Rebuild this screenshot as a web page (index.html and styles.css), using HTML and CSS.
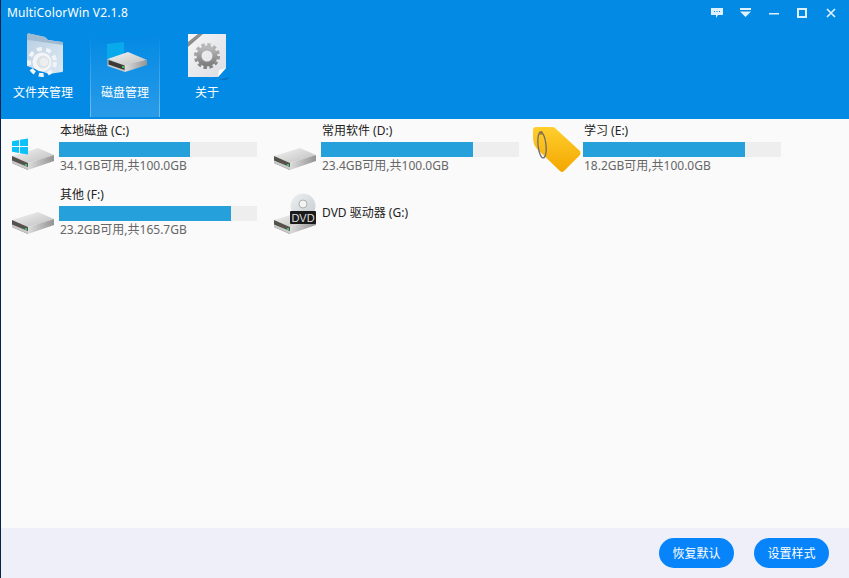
FILE: index.html
```html
<!DOCTYPE html>
<html lang="zh-CN">
<head>
    <meta charset="UTF-8">
    <meta name="viewport" content="width=device-width, initial-scale=1.0">
    <title>MultiColorWin V2.1.8</title>
    <link rel="stylesheet" href="styles.css">
</head>
<body>
    <svg class="defs" width="0" height="0" aria-hidden="true">
        <defs>
            <linearGradient id="top-face" x1="0" y1="0" x2="1" y2="1">
                <stop offset="0" stop-color="#f4f4f4"/>
                <stop offset="1" stop-color="#bdbdbd"/>
            </linearGradient>
            <linearGradient id="side-face" x1="0" y1="0" x2="1" y2="0">
                <stop offset="0" stop-color="#dcdcdc"/>
                <stop offset="1" stop-color="#949494"/>
            </linearGradient>
            <linearGradient id="tag-face" x1="0" y1="0" x2="0" y2="1">
                <stop offset="0" stop-color="#ffcf2e"/>
                <stop offset="1" stop-color="#f4a600"/>
            </linearGradient>
            <linearGradient id="sheet" x1="0" y1="0" x2="1" y2="1">
                <stop offset="0" stop-color="#f6f6f8"/>
                <stop offset="1" stop-color="#dcdde3"/>
            </linearGradient>
            <linearGradient id="folder" x1="0" y1="0" x2="1" y2="1">
                <stop offset="0" stop-color="#b9cfe3"/>
                <stop offset="1" stop-color="#dce8f2"/>
            </linearGradient>
            <linearGradient id="gear-metal" x1="0" y1="0" x2="0" y2="1">
                <stop offset="0" stop-color="#b8b8b8"/>
                <stop offset="1" stop-color="#7f7f7f"/>
            </linearGradient>
            <linearGradient id="disc" x1="0" y1="0" x2="1" y2="1">
                <stop offset="0" stop-color="#eef1f2"/>
                <stop offset="1" stop-color="#c4cbcf"/>
            </linearGradient>
            <symbol id="drive" viewBox="0 0 44 24">
                <path d="M1 9 27 1 43 8 17 16Z" fill="url(#top-face)"/>
                <path d="M17 16 43 8V14L17 23Z" fill="url(#side-face)"/>
                <path d="M1 9 17 16V23L1 16Z" fill="#55524e"/>
                <path d="M1 13.500 17 20V23L1 16Z" fill="#c9c9c9"/>
                <rect x="14" y="17" width="2" height="2" fill="#35c45f"/>
            </symbol>
            <symbol id="win-flag" viewBox="0 0 17 17">
                <path d="M0 3 7.500 1.600V8H0ZM8.500 1.400 17 0V8H8.500ZM0 9H7.500V15.400L0 14ZM8.500 9H17V17L8.500 15.600Z" fill="#0cc0f8"/>
            </symbol>
        </defs>
    </svg>

    <div class="window">
        <header class="top">
            <div class="titlebar">
                <span class="app-title">MultiColorWin V2.1.8</span>
                <div class="win-buttons">
                    <span class="win-btn">
                        <svg width="12" height="10" viewBox="0 0 12 10"><path d="M0 0H12V7H7L5 10V7H0Z" fill="#dff0fc"/><path d="M3 3.500H4M5.500 3.500H6.500M8 3.500H9" stroke="#0a8ae2"/></svg>
                    </span>
                    <span class="win-btn">
                        <svg width="11" height="9" viewBox="0 0 11 9"><path d="M0 0H11V2H0ZM0 3.500H11L5.500 9Z" fill="#dff0fc"/></svg>
                    </span>
                    <span class="win-btn">
                        <svg width="10" height="10" viewBox="0 0 10 10"><path d="M0 5H10V6.500H0Z" fill="#dff0fc"/></svg>
                    </span>
                    <span class="win-btn">
                        <svg width="10" height="10" viewBox="0 0 10 10"><path d="M1 1H9V9H1Z" fill="none" stroke="#dff0fc" stroke-width="2"/></svg>
                    </span>
                    <span class="win-btn">
                        <svg width="10" height="10" viewBox="0 0 10 10"><path d="M1 1 9 9M9 1 1 9" stroke="#dff0fc" stroke-width="1.700"/></svg>
                    </span>
                </div>
            </div>
            <nav class="tabs">
                <div class="tab">
                    <svg class="tab-icon" width="48" height="48" viewBox="0 0 48 48">
                        <path d="M8 2Q8 0 10 0.500L26 4 29 7 43 9Q44 9 44 11V38Q44 39 43 39L30 41 8 33Z" fill="url(#folder)"/>
                        <path d="M8 2Q8 0 10 0.500L26 4 29 7 43 9Q44 9 44 11V12L9 7 8 8Z" fill="#a3bbd1"/>
                        <circle cx="23" cy="29" r="13" fill="none" stroke="#f1f3f4" stroke-width="4" stroke-dasharray="5 4.300"/>
                        <circle cx="23" cy="29" r="9.500" fill="#f4f5f6"/>
                        <circle cx="24" cy="29" r="6.500" fill="#dde2e5"/>
                        <circle cx="25" cy="29" r="4" fill="#eceff0"/>
                    </svg>
                    <span class="tab-label">文件夹管理</span>
                </div>
                <div class="tab active">
                    <svg class="tab-icon" width="48" height="48" viewBox="0 0 48 48">
                        <path d="M6 11 23 9V26L6 27Z" fill="#09aaec"/>
                        <path d="M6.500 26 27 19 46 27 24 33Z" fill="url(#top-face)"/>
                        <path d="M24 32 46 27V32L24 39Z" fill="url(#side-face)"/>
                        <path d="M6.500 26 24 32V39L6.500 33Z" fill="#c8c8c8"/>
                        <path d="M7.500 27 23.500 32.500V37L7.500 31.500Z" fill="#3b3a38"/>
                        <rect x="21" y="33" width="2" height="2" fill="#35c45f"/>
                    </svg>
                    <span class="tab-label">磁盘管理</span>
                </div>
                <div class="tab">
                    <svg class="tab-icon" width="48" height="48" viewBox="0 0 48 48">
                        <path d="M7 47H36L47 44 43 47Z" fill="#0a5fa0" opacity=".6"/>
                        <path d="M5 1H43V35L35 44H5Z" fill="url(#sheet)"/>
                        <path d="M5 9 15 1H20L5 14Z" fill="#8e8e8e"/>
                        <circle cx="24" cy="23" r="8" fill="none" stroke="url(#gear-metal)" stroke-width="5"/>
                        <circle cx="24" cy="23" r="11.500" fill="none" stroke="url(#gear-metal)" stroke-width="3" stroke-dasharray="3.400 2.620"/>
                        <path d="M35 44 36 37 43 35Z" fill="#fff"/>
                    </svg>
                    <span class="tab-label">关于</span>
                </div>
            </nav>
        </header>

        <main class="drives">
            <div class="drive">
                <svg class="drive-icon" width="46" height="46" viewBox="0 0 46 46">
                    <use href="#drive" x="0" y="21" width="44" height="24"/>
                    <use href="#win-flag" x="1" y="12" width="16" height="17"/>
                </svg>
                <div class="drive-info">
                    <div class="drive-name">本地磁盘 (C:)</div>
                    <div class="bar"><div class="bar-fill" style="width: 66.200%"></div></div>
                    <div class="drive-size">34.1GB可用,共100.0GB</div>
                </div>
            </div>
            <div class="drive">
                <svg class="drive-icon" width="46" height="46" viewBox="0 0 46 46">
                    <use href="#drive" x="0" y="21" width="44" height="24"/>
                </svg>
                <div class="drive-info">
                    <div class="drive-name">常用软件 (D:)</div>
                    <div class="bar"><div class="bar-fill" style="width: 76.800%"></div></div>
                    <div class="drive-size">23.4GB可用,共100.0GB</div>
                </div>
            </div>
            <div class="drive">
                <svg class="drive-icon" width="46" height="46" viewBox="0 0 46 46">
                    <path d="M-2 4Q-2 1 1 1L17 1Q19 1 20 2L45 25Q46 27 45 29L29 45Q27 47 25 45L3 24Q-2 19 -2 12Z" fill="url(#tag-face)"/>
                    <circle cx="6" cy="7" r="2" fill="#c98a00"/>
                    <ellipse cx="7" cy="19" rx="4" ry="13" transform="rotate(-6 7 19)" fill="none" stroke="#6d6d6d" stroke-width="1.300"/>
                </svg>
                <div class="drive-info">
                    <div class="drive-name">学习 (E:)</div>
                    <div class="bar"><div class="bar-fill" style="width: 81.800%"></div></div>
                    <div class="drive-size">18.2GB可用,共100.0GB</div>
                </div>
            </div>
            <div class="drive">
                <svg class="drive-icon" width="46" height="46" viewBox="0 0 46 46">
                    <use href="#drive" x="0" y="21" width="44" height="24"/>
                </svg>
                <div class="drive-info">
                    <div class="drive-name">其他 (F:)</div>
                    <div class="bar"><div class="bar-fill" style="width: 87%"></div></div>
                    <div class="drive-size">23.2GB可用,共165.7GB</div>
                </div>
            </div>
            <div class="drive">
                <svg class="drive-icon" width="46" height="46" viewBox="0 0 46 46">
                    <use href="#drive" x="0" y="21" width="44" height="24"/>
                    <circle cx="30" cy="16" r="12.500" fill="url(#disc)"/>
                    <circle cx="30" cy="14" r="4" fill="#f4f4f4" stroke="#b0b0b0"/>
                    <path d="M18 21H42Q43 21 43 22V33Q43 34 42 34H18Q17 34 17 33V22Q17 21 18 21Z" fill="#1a1a1a"/>
                    <text class="dvd-text" x="30" y="31.500">DVD</text>
                </svg>
                <div class="drive-info">
                    <div class="drive-name drive-name-only">DVD 驱动器 (G:)</div>
                </div>
            </div>
        </main>

        <footer class="bottom">
            <button class="pill">恢复默认</button>
            <button class="pill">设置样式</button>
        </footer>
    </div>
</body>
</html>
```

FILE: styles.css
```css
body {
    margin: 0;
    padding: 0;
    font-family: "Noto Sans", "Noto Sans CJK SC", sans-serif;
    font-size: 12px;
    background-color: #fafafa;
}
.defs {
    position: absolute;
}
.window {
    display: flex;
    flex-direction: column;
    width: 100%;
    height: 578px;
    box-sizing: border-box;
    border-left: 1px solid #06234a;
    overflow: hidden;
}
.top {
    height: 119px;
    background-color: #038ae4;
    color: #fff;
    flex-shrink: 0;
}
.titlebar {
    display: flex;
    justify-content: space-between;
    align-items: center;
    height: 25px;
    padding: 0 4px 0 6px;
}
.app-title {
    font-size: 12px;
    letter-spacing: 0.15px;
}
.win-buttons {
    display: flex;
}
.win-btn {
    display: flex;
    justify-content: center;
    align-items: center;
    width: 28.500px;
    height: 25px;
}
.tabs {
    display: flex;
    gap: 12px;
    padding: 11px 0 0 7px;
}
.tab {
    display: flex;
    flex-direction: column;
    align-items: center;
    width: 70px;
    height: 81px;
    box-sizing: border-box;
}
.tab.active {
    background: linear-gradient(to bottom, rgba(255,255,255,0), rgba(255,255,255,0.15));
    border-left: 1px solid;
    border-right: 1px solid;
    border-image: linear-gradient(to bottom, rgba(255,255,255,0), rgba(255,255,255,0.35)) 1;
}
.tab-icon {
    margin-top: -3px;
    flex-shrink: 0;
}
.tab-label {
    margin-top: 3px;
    font-size: 12px;
    line-height: 18px;
    white-space: nowrap;
}
.drives {
    flex: 1;
    display: grid;
    grid-template-columns: repeat(3, 262px);
    grid-auto-rows: 64px;
    align-content: start;
    padding: 2px 0 0 10px;
    background-color: #fafafa;
}
.drive {
    display: flex;
}
.drive-icon {
    flex-shrink: 0;
    overflow: visible;
    margin: 5px 2px 0 0;
}
.drive-info {
    display: flex;
    flex-direction: column;
    width: 198px;
}
.drive-name {
    height: 21px;
    line-height: 20px;
    padding-left: 1px;
    color: #222;
}
.drive-name-only {
    margin-top: 18px;
}
.bar {
    height: 15px;
    background-color: #eeeeee;
}
.bar-fill {
    height: 100%;
    background-color: #26a0da;
}
.drive-size {
    line-height: 18px;
    padding-left: 1px;
    color: #666;
}
.dvd-text {
    font-family: "Liberation Sans", sans-serif;
    font-size: 11px;
    fill: #ddd;
    text-anchor: middle;
}
.bottom {
    display: flex;
    justify-content: flex-end;
    align-items: center;
    gap: 20px;
    height: 50px;
    padding: 0 20px 0 0;
    background-color: #eeeff8;
    flex-shrink: 0;
}
.pill {
    width: 75px;
    height: 30px;
    border: none;
    border-radius: 15px;
    background-color: #0784fa;
    color: #fff;
    font-family: inherit;
    font-size: 12px;
    padding: 0;
}
```
